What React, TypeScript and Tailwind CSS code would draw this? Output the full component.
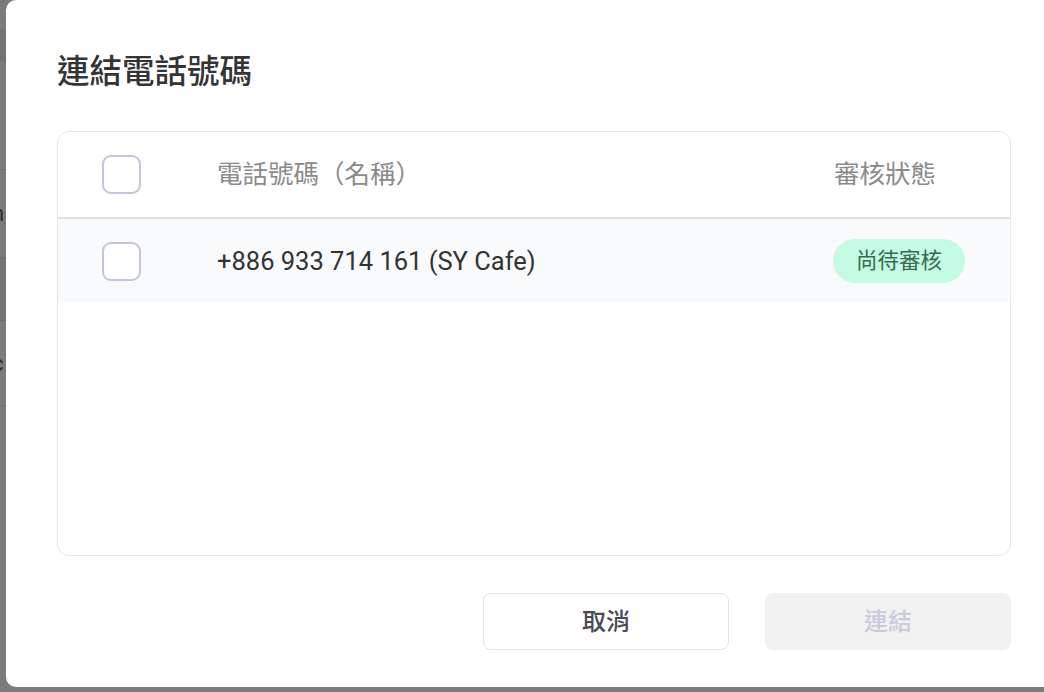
import React from 'react';

const font = { fontFamily: 'Roboto, "Noto Sans CJK TC", sans-serif' };

function Checkbox() {
  return <div className="h-[39px] w-[39px] rounded-[9px] border-2 border-[#c3c6d9] bg-white" />;
}

export default function App() {
  return (
    <div className="relative h-[692px] w-[1044px] overflow-hidden bg-[#7b7b7b]" style={font}>
      {/* page behind the overlay */}
      <div className="flex flex-col">
        <div className="h-[30px]" />
        <div className="h-[32px] bg-[#737373]" />
        <div className="h-[108px] border-b border-[#6e6e6e]" />
        <div className="flex h-[88px] items-center border-b border-[#6e6e6e] text-[22px] text-[#2a2a2a]">
          <span className="-ml-[8px]">n</span>
        </div>
        <div className="h-[62px] bg-[#737373]" />
        <div className="flex h-[86px] items-center border-t border-b border-[#6e6e6e] text-[22px] text-[#2a2a2a]">
          <span className="-ml-[8px]">c</span>
        </div>
      </div>

      {/* modal */}
      <div className="absolute top-0 left-[6px] flex h-[687px] w-[1056px] flex-col rounded-[10px] bg-white px-[51px] pt-[50px] pb-[37px]">
        <h2 className="h-[44px] text-[32.5px] leading-[44px] font-medium text-[#343434]">連結電話號碼</h2>

        <div className="mt-[37px] flex flex-1 flex-col rounded-[12px] border border-[#e7e8ee]">
          {/* header */}
          <div className="flex h-[87px] items-center border-b-2 border-[#e2e2e4] pl-[44px]">
            <Checkbox />
            <div className="ml-[76px] flex-1 text-[25.5px] text-[#8a8a8a]">電話號碼（名稱）</div>
            <div className="w-[176px] text-[25.5px] text-[#8a8a8a]">審核狀態</div>
          </div>
          {/* row */}
          <div className="flex h-[84px] items-center bg-[#f9fafc] pl-[44px]">
            <Checkbox />
            <div className="ml-[76px] flex-1 text-[25.5px] text-[#333333]">+886 933 714 161 (SY Cafe)</div>
            <div className="w-[177px]">
              <span className="inline-flex h-[44px] items-center rounded-full bg-[#c4fbe2] px-[23px] text-[21.5px] text-[#356b50]">
                尚待審核
              </span>
            </div>
          </div>
        </div>

        <div className="mt-[37px] flex justify-end gap-[36px]">
          <button className="flex h-[57px] w-[246px] items-center justify-center rounded-[8px] border border-[#e3e3e8] bg-white text-[24px] font-medium text-[#4a4a55]">
            取消
          </button>
          <button className="flex h-[57px] w-[246px] items-center justify-center rounded-[8px] bg-[#f1f1f2] text-[24px] font-medium text-[#c9cadc]">
            連結
          </button>
        </div>
      </div>
    </div>
  );
}
